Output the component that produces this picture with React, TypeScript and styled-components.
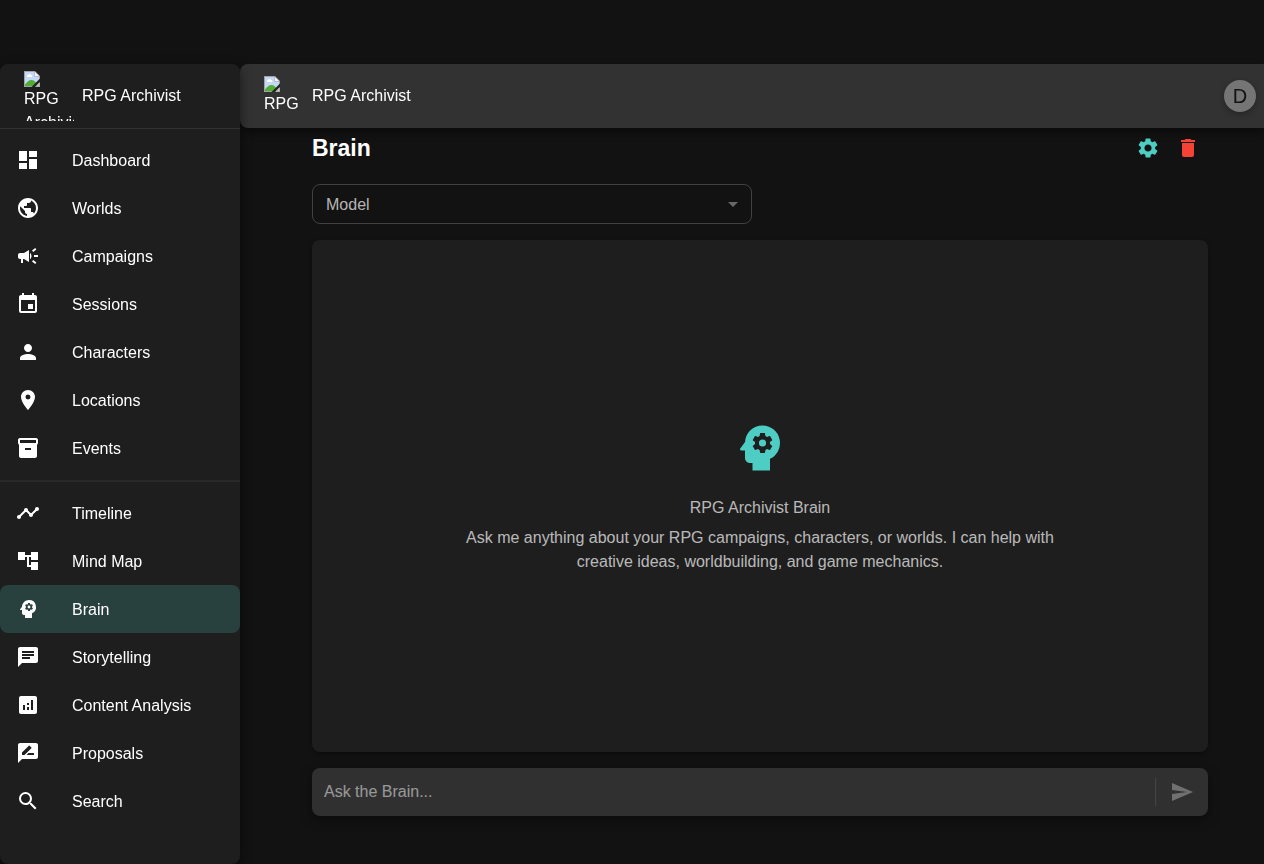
import React, { useState } from "react";
import styled, { createGlobalStyle } from "styled-components";
import type { IconType } from "react-icons";
import {
  MdAccountTree,
  MdAnalytics,
  MdArrowDropDown,
  MdCampaign,
  MdChat,
  MdDashboard,
  MdDelete,
  MdEvent,
  MdInventory2,
  MdLocationOn,
  MdPerson,
  MdPsychology,
  MdPublic,
  MdRateReview,
  MdSearch,
  MdSend,
  MdSettings,
  MdTimeline,
} from "react-icons/md";

const GlobalStyle = createGlobalStyle`
  *, *::before, *::after { box-sizing: border-box; }
  body {
    margin: 0;
    background: #121212;
    color: #fff;
    font-family: "Liberation Sans", Arial, sans-serif;
    font-size: 16px;
    line-height: 24px;
  }
  button, input, select { font: inherit; color: inherit; }
`;

const Page = styled.div`
  display: grid;
  grid-template-columns: 240px minmax(0, 1fr);
  min-height: 100vh;
  padding-top: 64px;
`;

const Sidebar = styled.aside`
  z-index: 2;
  border-radius: 8px;
  background: #1e1e1e;
  box-shadow: 0 4px 12px rgba(0, 0, 0, 0.5);
  will-change: transform;
`;

const Brand = styled.div`
  display: flex;
  align-items: center;
  gap: 8px;
  height: 65px;
  padding: 0 24px 1px;
  border-bottom: 1px solid rgba(255, 255, 255, 0.09);
`;

const LogoBox = styled.span<{ $size: number }>`
  display: block;
  flex: none;
  width: ${(p) => p.$size}px;
  height: ${(p) => p.$size}px;
  overflow: hidden;

  svg {
    display: block;
  }
`;

const BrandName = styled.span`
  white-space: nowrap;
`;

const NavList = styled.ul`
  margin: 0;
  padding: 7px 0 8px;
  list-style: none;

  & + & {
    border-top: 2px solid rgba(255, 255, 255, 0.05);
  }
`;

const NavLink = styled.a<{ $active: boolean }>`
  display: flex;
  align-items: center;
  gap: 32px;
  height: 48px;
  padding: 0 16px;
  border-radius: 8px;
  background: ${(p) => (p.$active ? "rgba(78, 205, 196, 0.2)" : "transparent")};
  color: #fff;
  text-decoration: none;

  &:hover {
    background: rgba(78, 205, 196, 0.2);
  }
`;

const NavLabel = styled.span`
  padding-top: 2px;
`;

const Content = styled.div`
  display: flex;
  flex-direction: column;
`;

const TopBar = styled.header`
  display: flex;
  align-items: center;
  gap: 8px;
  height: 64px;
  padding: 0 8px 0 24px;
  border-radius: 8px 0 0 8px;
  background: #323232;
  box-shadow: 0 4px 8px rgba(0, 0, 0, 0.4);
  will-change: transform;
`;

const Avatar = styled.button`
  width: 32px;
  height: 32px;
  margin-left: auto;
  padding: 0;
  border: 0;
  border-radius: 50%;
  background: #757575;
  color: #121212;
  font-size: 20px;
  line-height: 32px;
  box-shadow: 0 2px 6px rgba(0, 0, 0, 0.3);
`;

const Main = styled.main`
  display: flex;
  flex: 1;
  flex-direction: column;
  gap: 16px;
  padding: 0 56px 48px 72px;
`;

const TitleRow = styled.div`
  display: flex;
  align-items: center;
`;

const Title = styled.h1`
  flex: 1;
  margin: 0;
  font-size: 23px;
  line-height: 32px;
`;

const IconButton = styled.button<{ $color: string }>`
  display: grid;
  place-items: center;
  width: 40px;
  height: 40px;
  padding: 0;
  border: 0;
  border-radius: 50%;
  background: transparent;
  color: ${(p) => p.$color};
`;

const Filters = styled.div`
  display: grid;
  grid-template-columns: 1fr 1fr;
  gap: 16px;
`;

const SelectField = styled.div`
  display: grid;
  align-items: center;

  & > * {
    grid-area: 1 / 1;
  }

  & > svg {
    justify-self: end;
    margin-right: 7px;
    color: #686868;
    pointer-events: none;
  }
`;

const Select = styled.select`
  appearance: none;
  width: 100%;
  height: 40px;
  padding: 2px 32px 0 13px;
  border: 1px solid #414141;
  border-radius: 8px;
  background: #121212;
  color: rgba(255, 255, 255, 0.7);
`;

const Conversation = styled.section`
  display: flex;
  flex: 1;
  flex-direction: column;
  align-items: center;
  justify-content: center;
  padding: 16px;
  border-radius: 8px;
  background: #1e1e1e;
  color: rgba(255, 255, 255, 0.7);
  text-align: center;
  box-shadow: 0 2px 4px rgba(0, 0, 0, 0.3);

  & > svg {
    margin-bottom: 18px;
    color: #4ecdc4;
  }
`;

const EmptyTitle = styled.h2`
  margin: 0 0 6px;
  font-size: 16px;
  font-weight: 400;
`;

const EmptyText = styled.p`
  max-width: 600px;
  margin: 0;
`;

const Composer = styled.form`
  display: flex;
  align-items: center;
  height: 48px;
  padding: 0 4px;
  border-radius: 8px;
  background: #303030;
  box-shadow: 0 4px 12px rgba(0, 0, 0, 0.4);
`;

const MessageInput = styled.input`
  flex: 1;
  min-width: 0;
  height: 32px;
  padding: 0 8px 1px;
  border: 0;
  outline: 0;
  background: transparent;

  &::placeholder {
    color: #fff;
    opacity: 0.5;
  }
`;

const Separator = styled.span`
  width: 1px;
  height: 28px;
  margin: 0 4px;
  background: #444;
`;

const SendButton = styled(IconButton)`
  width: 44px;
`;

function MissingLogo({ size }: { size: number }) {
  return (
    <LogoBox $size={size}>
      <svg width="16" height="16" viewBox="0 0 16 16" aria-hidden="true">
        <path d="M0 0h11l5 5v11H0z" fill="#a3a3a3" />
        <path d="M1 1h9.500v4.500H15V15H1z" fill="#c5d8f8" />
        <path d="M11 1l4 4h-4z" fill="#f4f4f4" />
        <path d="M3 6a1.500 1.500 0 0 1 1-2 1.700 1.700 0 0 1 3 0 1.200 1.200 0 0 1 1 2z" fill="#fff" />
        <path d="M1 15v-1.500C3 11 5 9 7.500 9s4 2 7.500 6z" fill="#53ad35" />
        <path d="M16 7.500L7.500 16h3.500L16 11z" fill="#242424" />
        <path d="M11.500 15.500L15.500 11.500V15.500z" fill="#b9c4b4" />
      </svg>
      RPG Archivist
    </LogoBox>
  );
}

type NavEntry = [string, IconType];

const groups: NavEntry[][] = [
  [
    ["Dashboard", MdDashboard],
    ["Worlds", MdPublic],
    ["Campaigns", MdCampaign],
    ["Sessions", MdEvent],
    ["Characters", MdPerson],
    ["Locations", MdLocationOn],
    ["Events", MdInventory2],
  ],
  [
    ["Timeline", MdTimeline],
    ["Mind Map", MdAccountTree],
    ["Brain", MdPsychology],
    ["Storytelling", MdChat],
    ["Content Analysis", MdAnalytics],
    ["Proposals", MdRateReview],
    ["Search", MdSearch],
  ],
];

export default function App() {
  const [message, setMessage] = useState("");

  return (
    <>
      <GlobalStyle />
      <Page>
        <Sidebar>
          <Brand>
            <MissingLogo size={50} />
            <BrandName>RPG Archivist</BrandName>
          </Brand>
          <nav aria-label="Main">
            {groups.map((entries) => (
              <NavList key={entries[0][0]}>
                {entries.map(([label, Icon]) => (
                  <li key={label}>
                    <NavLink
                      href={`#${label.toLowerCase().replace(" ", "-")}`}
                      $active={label === "Brain"}
                      aria-current={label === "Brain" ? "page" : undefined}
                    >
                      <Icon size={24} />
                      <NavLabel>{label}</NavLabel>
                    </NavLink>
                  </li>
                ))}
              </NavList>
            ))}
          </nav>
        </Sidebar>
        <Content>
          <TopBar>
            <MissingLogo size={40} />
            <BrandName>RPG Archivist</BrandName>
            <Avatar type="button" aria-label="Account">
              D
            </Avatar>
          </TopBar>
          <Main>
            <TitleRow>
              <Title>Brain</Title>
              <IconButton type="button" $color="#4ecdc4" aria-label="Settings">
                <MdSettings size={24} />
              </IconButton>
              <IconButton type="button" $color="#f44336" aria-label="Clear conversation">
                <MdDelete size={24} />
              </IconButton>
            </TitleRow>
            <Filters>
              <SelectField>
                <Select aria-label="Model" defaultValue="">
                  <option value="">Model</option>
                </Select>
                <MdArrowDropDown size={24} />
              </SelectField>
            </Filters>
            <Conversation>
              <MdPsychology size={60} />
              <EmptyTitle>RPG Archivist Brain</EmptyTitle>
              <EmptyText>
                Ask me anything about your RPG campaigns, characters, or worlds. I can help with
                creative ideas, worldbuilding, and game mechanics.
              </EmptyText>
            </Conversation>
            <Composer onSubmit={(e) => e.preventDefault()}>
              <MessageInput
                aria-label="Ask the Brain"
                placeholder="Ask the Brain..."
                value={message}
                onChange={(e) => setMessage(e.target.value)}
              />
              <Separator />
              <SendButton type="submit" $color="#707070" aria-label="Send">
                <MdSend size={24} />
              </SendButton>
            </Composer>
          </Main>
        </Content>
      </Page>
    </>
  );
}
